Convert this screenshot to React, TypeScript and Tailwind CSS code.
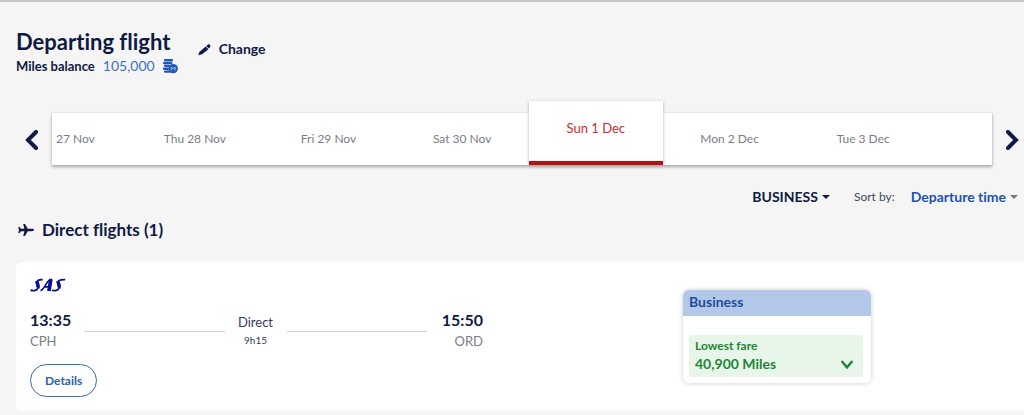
import { useState } from "react";

const days = ["27 Nov", "Thu 28 Nov", "Fri 29 Nov", "Sat 30 Nov", "Sun 1 Dec", "Mon 2 Dec", "Tue 3 Dec"];

const PencilIcon = () => (
  <svg viewBox="0 0 13 13" className="w-[13px] h-[13px]" fill="currentColor" aria-hidden="true">
    <path d="M0.300 12.300l1-3.300 6.400-5.500 2.700 2.700-6.400 5.100z" />
    <path d="M8.200 3.100l1.900-1.600c.5-.4 1-.4 1.400 0l.7.8c.4.500.4.900 0 1.400l-1.400 1.900z" />
  </svg>
);

const MilesIcon = () => (
  <svg viewBox="0 0 15 15" className="w-[15px] h-[15px]" aria-hidden="true">
    <g fill="#2158b8">
      <rect x="1" y="0" width="9" height="2.500" rx="1" />
      <rect x="0" y="3" width="9.500" height="2.300" rx="1" />
      <rect x="1" y="5.800" width="6" height="2.300" rx="1" />
      <rect x="0" y="8.600" width="6" height="2.300" rx="1" />
      <rect x="1" y="11.400" width="7" height="2.300" rx="1" />
      <circle cx="10.200" cy="9.600" r="4.700" />
    </g>
    <path d="M8.300 11.600V8l1.900 2 1.900-2v3.600" fill="none" stroke="#a9c3ee" strokeWidth="0.900" />
  </svg>
);

const PlaneIcon = () => (
  <svg viewBox="0 0 16 14" className="w-4 h-3.5" fill="currentColor" aria-hidden="true">
    <path d="M16 7c0 .7-1 1.200-2.200 1.200H9.800L7 13H5.200l1.200-4.800H3L1.600 10H.2L1 7 .2 4h1.400L3 5.800h3.400L5.200 1H7l2.800 4.800h4C15 5.800 16 6.300 16 7z" />
  </svg>
);

type ChevronProps = { points: string; className: string; width: number };

const Chevron = ({ points, className, width }: ChevronProps) => (
  <svg viewBox="0 0 20 20" className={className} fill="none" stroke="currentColor" strokeWidth={width} strokeLinecap="round" aria-hidden="true">
    <polyline points={points} />
  </svg>
);

const Caret = ({ className }: { className: string }) => (
  <svg viewBox="0 0 8 4" className={`w-2 h-1 pointer-events-none ${className}`} fill="currentColor" aria-hidden="true">
    <path d="M0 0h8L4 4z" />
  </svg>
);

const SasLogo = () => (
  <svg viewBox="0 0 36 14" className="block w-9 h-3.5" role="img" aria-label="SAS" fill="none" stroke="#0c0c96">
    <path d="M0.500 12.100c3 1.100 6.800.4 7.400-2.100.5-2.200-1.800-3.600-1-6 .6-1.900 2.300-2.600 5.800-2.300" strokeWidth="1.700" />
    <path d="M7.100 3.300c-.3 2.500 1.900 4.100.8 6.700" strokeWidth="3.600" />
    <path d="M10.500 12.700c2-.5 3.500-2.900 5.300-6 1.700-3 3.200-5 6.200-5.300M14.500 8.900h5" strokeWidth="1.600" />
    <path d="M20.900 1.100L18.900 13" strokeWidth="3.700" />
    <path d="M21.900 12.300c3 .8 6.500.2 7.100-2.300.5-2.200-1.800-3.600-1-6 .6-1.900 2.700-2.600 7.200-2.300" strokeWidth="1.700" />
    <path d="M28.200 3.300c-.3 2.500 1.900 4.100.8 6.700" strokeWidth="3.600" />
  </svg>
);

const App = () => {
  const [selected, setSelected] = useState("Sun 1 Dec");

  return (
    <div className="min-h-screen bg-[#f5f5f5] border-t-2 border-[#c3c7c6] pb-1 text-[#0f1a45] font-[Lato,sans-serif] [font-variant-ligatures:none]">
      <header className="flex items-start gap-5 pt-7 pl-4">
        <div>
          <h1 className="text-[22px] leading-6 font-bold">Departing flight</h1>
          <p className="flex items-center gap-2 text-[13px] leading-6 font-bold">
            Miles balance
            <span className="text-sm leading-6 font-normal text-[#3c70c9]">105,000</span>
            <MilesIcon />
          </p>
        </div>
        <button type="button" className="flex items-center gap-2 mt-[7px] text-sm leading-6 font-bold">
          <PencilIcon />
          Change
        </button>
      </header>

      <nav aria-label="Departure dates" className="flex items-center mt-[23px]">
        <button type="button" aria-label="Earlier dates" className="flex justify-center w-[52px] pl-3 pt-3.5">
          <Chevron points="14,2 6,10 14,18" className="w-5 h-5" width={4} />
        </button>
        <div className="flex flex-1 items-end bg-white shadow-[0_2px_3px_#aaaaaa,0_0_2px_#cccccc] h-[52px] mt-3 pr-[62px]">
          {days.map((day, i) => (
            <button
              key={day}
              type="button"
              onClick={() => setSelected(day)}
              className={
                day === selected
                  ? "flex-1 h-16 pb-1 bg-white border-b-4 border-[#b90f12] text-[13px] text-[#c92b2e] shadow-[0_1px_3px_#aaaaaa]"
                  : i === 0
                    ? "shrink-0 w-[76px] h-[52px] pl-1 text-left text-xs text-[#7c7c86]"
                    : "flex-1 h-[52px] text-xs text-[#7c7c86]"
              }
            >
              {day}
            </button>
          ))}
        </div>
        <button type="button" aria-label="Later dates" className="flex justify-center w-8 pl-2 pt-3.5">
          <Chevron points="6,2 14,10 6,18" className="w-5 h-5" width={4} />
        </button>
      </nav>

      <div className="flex items-center justify-end gap-6 mt-5 pr-1.5 leading-6">
        <div className="flex items-center gap-1">
          <select aria-label="Cabin" className="appearance-none field-sizing-content text-sm leading-6 font-bold">
            <option>BUSINESS</option>
          </select>
          <Caret className="" />
        </div>
        <div className="flex items-center">
          <label htmlFor="sort" className="mr-4 text-xs leading-6 text-[#44495f]">Sort by:</label>
          <select id="sort" className="appearance-none field-sizing-content text-sm leading-6 font-bold text-[#1a52b8]">
            <option>Departure time</option>
          </select>
          <Caret className="ml-1 text-[#777777]" />
        </div>
      </div>

      <main className="pl-4">
        <h2 className="flex items-center gap-2 mt-[9px] pl-0.5 text-[17px] leading-6 font-bold">
          <PlaneIcon />
          Direct flights (1)
        </h2>

        <section className="flex mt-5 rounded-l-md bg-white pl-3.5 pb-3.5">
          <div className="w-[453px] pt-4">
            <SasLogo />
            <div className="flex mt-4">
              <div className="w-[54px]">
                <p className="text-base leading-6 font-bold">13:35</p>
                <p className="text-[13px] leading-[18px] text-[#7c7c86]">CPH</p>
              </div>
              <div className="flex-1 mt-[23px] border-t border-[#cfcfd4]" />
              <div className="w-[62px] pt-1 text-center">
                <p className="text-[13px] leading-5 text-[#343a5c]">Direct</p>
                <p className="text-[10px] leading-4 text-[#343a5c]">9h15</p>
              </div>
              <div className="flex-1 mt-[23px] border-t border-[#cfcfd4]" />
              <div className="w-14 text-right">
                <p className="text-base leading-6 font-bold">15:50</p>
                <p className="text-[13px] leading-[18px] text-[#7c7c86]">ORD</p>
              </div>
            </div>
            <button type="button" className="h-[33px] mt-3.5 px-3.5 rounded-full border border-[#3d67ad] text-xs font-bold text-[#2c5fae]">
              Details
            </button>
          </div>

          <div className="self-start w-[188px] mt-7 ml-[200px] rounded-md overflow-hidden bg-white shadow-[0_0_5px_#cccccc]">
            <h3 className="px-1.5 pb-0.5 text-sm leading-6 font-bold bg-[#b3c7e9] text-[#244c9b]">Business</h3>
            <button type="button" className="flex items-end justify-between w-[174px] mx-1.5 mt-[19px] mb-1.5 px-1.5 pt-0.5 pb-1 rounded-xs bg-[#e7f6e9] text-left text-[#1f8535]">
              <span>
                <span className="block text-xs leading-[18px] font-bold">Lowest fare</span>
                <span className="block text-sm leading-[18px] font-bold">40,900 Miles</span>
              </span>
              <Chevron points="4,6 10,13 16,6" className="w-4 h-4 mr-0.5" width={3} />
            </button>
          </div>
        </section>
      </main>
    </div>
  );
};

export default App;
